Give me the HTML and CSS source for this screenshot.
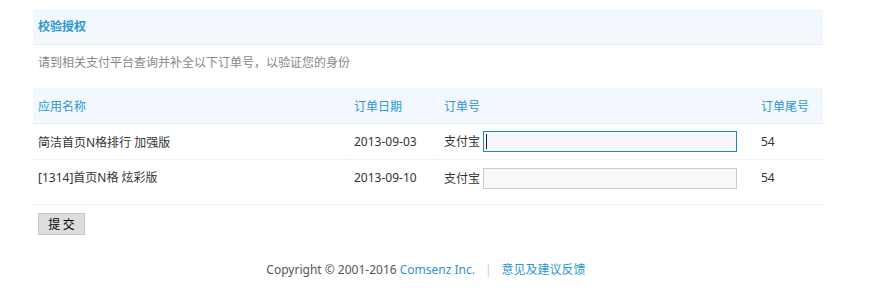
FILE: index.html
```html
<!DOCTYPE html>
<html lang="zh-CN">
<head>
<meta charset="utf-8">
<title>校验授权</title>
<link rel="stylesheet" href="styles.css">
</head>
<body>
<div class="wrap">
  <div class="title">校验授权</div>
  <p class="desc">请到相关支付平台查询并补全以下订单号，以验证您的身份</p>
  <table class="orders">
    <thead>
      <tr>
        <th class="c-name">应用名称</th>
        <th class="c-date">订单日期</th>
        <th class="c-no">订单号</th>
        <th class="c-tail">订单尾号</th>
      </tr>
    </thead>
    <tbody>
      <tr class="r1">
        <td>简洁首页N格排行 加强版</td>
        <td>2013-09-03</td>
        <td><span class="pay">支付宝</span><span class="field"><input class="txt focus" type="text"><span class="caret"></span></span></td>
        <td>54</td>
      </tr>
      <tr class="r2">
        <td>[1314]首页N格 炫彩版</td>
        <td>2013-09-10</td>
        <td><span class="pay">支付宝</span><span class="field"><input class="txt" type="text"></span></td>
        <td>54</td>
      </tr>
    </tbody>
  </table>
  <div class="actions"><button class="btn" type="button">提 交</button></div>
  <div class="footer">Copyright © 2001-2016 <a class="lnk" href="#">Comsenz Inc.</a><span class="sep">|</span><a class="lnk" href="#">意见及建议反馈</a></div>
</div>
</body>
</html>
```
FILE: styles.css
```css
html, body { margin: 0; padding: 0; background: #fff; }
body {
  font-family: "Noto Sans", "Noto Sans CJK SC", sans-serif;
  font-size: 12px;
  color: #333;
}
.wrap { margin: 9px 0 0 33px; width: 790px; }
.title {
  height: 35px;
  line-height: 35px;
  padding-left: 5px;
  background: #f2f8fe;
  border-bottom: 1px dotted #dde6ee;
  color: #2b97d0;
  font-weight: bold;
}
.desc {
  margin: 0;
  height: 43px;
  line-height: 36px;
  padding-left: 5px;
  color: #888;
}
.orders { width: 790px; border-collapse: collapse; table-layout: fixed; }
.orders th, .orders td { text-align: left; padding: 0 0 0 5px; font-weight: normal; }
.orders th {
  height: 35px;
  background: #f2f8fe;
  color: #2b97d0;
  border-bottom: 1px dotted #dde6ee;
}
.c-name { width: 311px; }
.c-date { width: 85px; }
.c-no { width: 312px; }
.orders td { border-bottom: 1px dotted #e3e8ec; color: #333; }
.r1 td { height: 35px; }
.r2 td {
  vertical-align: top;
  height: 21px;
  padding-top: 7px;
  padding-bottom: 15px;
  line-height: 21px;
}
.pay { display: inline-block; margin-right: 3px; vertical-align: middle; line-height: 21px; }
.field { position: relative; display: inline-block; vertical-align: middle; height: 21px; }
.txt {
  display: block;
  box-sizing: border-box;
  width: 254px;
  height: 21px;
  margin: 0;
  padding: 0 3px;
  border: 1px solid #ccc;
  background: #f9f9f9;
  font-size: 12px;
}
.txt.focus { border-color: #1e8ac2; background: #f4f8fc; }
.caret {
  position: absolute;
  left: 3px;
  top: 3px;
  width: 1px;
  height: 15px;
  background: #222;
}
.actions { padding: 8px 0 0 5px; height: 22px; }
.btn {
  box-sizing: border-box;
  width: 47px;
  height: 22px;
  margin: 0;
  padding: 0;
  border: 1px solid #c6c6c6;
  background: #dddddd;
  color: #000;
  font-family: "Noto Sans CJK SC", sans-serif;
  font-size: 12px;
  line-height: 20px;
}
.footer {
  margin-top: 25px;
  text-align: center;
  color: #555;
  padding-right: 4px;
}
.lnk { color: #2b97d0; text-decoration: none; }
.sep { color: #ccc; margin: 0 10px; }
```
